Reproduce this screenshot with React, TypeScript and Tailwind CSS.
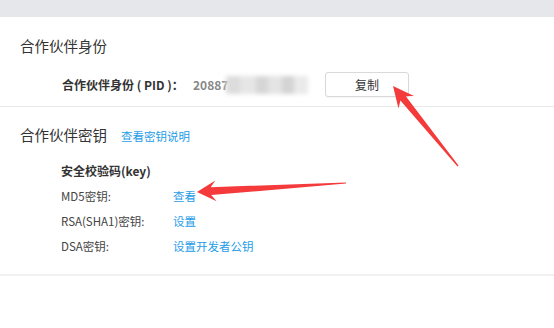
import React from "react";

type P = [number, number];

function arrowPoints(
  tip: P,
  tail: P,
  headLen: number,
  headHalf: number,
  notchLen: number,
  notchHalf: number,
  tailHalf: number
): string {
  const dx = tip[0] - tail[0];
  const dy = tip[1] - tail[1];
  const len = Math.hypot(dx, dy);
  const ux = dx / len;
  const uy = dy / len;
  const nx = -uy;
  const ny = ux;
  const at = (back: number, off: number): P => [
    tip[0] - ux * back + nx * off,
    tip[1] - uy * back + ny * off,
  ];
  const pts: P[] = [
    tip,
    at(headLen, headHalf),
    at(notchLen, notchHalf),
    [tail[0] + nx * tailHalf, tail[1] + ny * tailHalf],
    [tail[0] - nx * tailHalf, tail[1] - ny * tailHalf],
    at(notchLen, -notchHalf),
    at(headLen, -headHalf),
  ];
  return pts.map((p) => `${p[0].toFixed(1)},${p[1].toFixed(1)}`).join(" ");
}

export default function App() {
  const font = {
    fontFamily: '"Noto Sans CJK SC", "Noto Sans", sans-serif',
  };
  return (
    <div
      className="relative w-[554px] h-[328px] overflow-hidden bg-white text-[#333]"
      style={font}
    >
      <div className="h-[17px] bg-[#e6e7eb]" />

      {/* Section 1 */}
      <div className="border-b border-[#e8e8e8] pb-[9px]">
        <div className="pl-[20px] pt-[19px] text-[14.5px] leading-[20px] text-[#333]">
          合作伙伴身份
        </div>
        <div className="mt-[16px] flex h-[25px] items-center pl-[62px] text-[12px]">
          <div className="w-[131px] font-bold text-[#333] leading-[16px]">
            合作伙伴身份 ( PID )：
          </div>
          <div className="flex w-[132px] items-center">
            <span className="font-bold text-[#888] leading-[16px]">20887</span>
            <span className="-ml-[2px] flex h-[18px] w-[82px] blur-[2px]">
              <span className="h-full w-[14px] bg-[#dcdcdc]" />
              <span className="h-full w-[16px] bg-[#e6e6e6]" />
              <span className="h-full w-[12px] bg-[#d6d6d6]" />
              <span className="h-full w-[14px] bg-[#e4e4e4]" />
              <span className="h-full w-[12px] bg-[#d4d4d4]" />
              <span className="h-full w-[14px] bg-[#eaeaea]" />
            </span>
          </div>
          <button className="flex h-[25px] w-[84px] items-center justify-center rounded-[3px] border border-[#d9d9d9] bg-white text-[12px] text-[#333] shadow-[0_1px_1px_rgba(0,0,0,0.04)]">
            复制
          </button>
        </div>
      </div>

      {/* Section 2 */}
      <div className="border-b-2 border-[#f1f1f1] pb-[15px]">
        <div className="flex items-baseline pl-[20px] pt-[18px]">
          <span className="text-[14.5px] leading-[20px] text-[#333]">合作伙伴密钥</span>
          <span className="ml-[14px] text-[11.5px] text-[#1e9de8]">查看密钥说明</span>
        </div>
        <div className="mt-[13px] pl-[61px] text-[11.5px]">
          <div className="flex h-[26px] items-center text-[12px] font-bold text-[#333]">
            安全校验码(key)
          </div>
          <div className="flex h-[25px] items-center">
            <span className="w-[112px] text-[#444]">MD5密钥:</span>
            <span className="text-[#1e9de8]">查看</span>
          </div>
          <div className="flex h-[25px] items-center">
            <span className="w-[112px] text-[#444]">RSA(SHA1)密钥:</span>
            <span className="text-[#1e9de8]">设置</span>
          </div>
          <div className="flex h-[25px] items-center">
            <span className="w-[112px] text-[#444]">DSA密钥:</span>
            <span className="text-[#1e9de8]">设置开发者公钥</span>
          </div>
        </div>
      </div>

      {/* Annotation arrows */}
      <svg
        className="pointer-events-none absolute left-0 top-0"
        width={554}
        height={328}
        viewBox="0 0 554 328"
      >
        <polygon
          points={arrowPoints([393, 86], [458, 166], 21, 10, 16, 3.5, 0.6)}
          fill="#f43a3a"
        />
        <polygon
          points={arrowPoints([197, 192], [346, 183], 19, 10.5, 14, 4, 0.6)}
          fill="#f43a3a"
        />
      </svg>
    </div>
  );
}
